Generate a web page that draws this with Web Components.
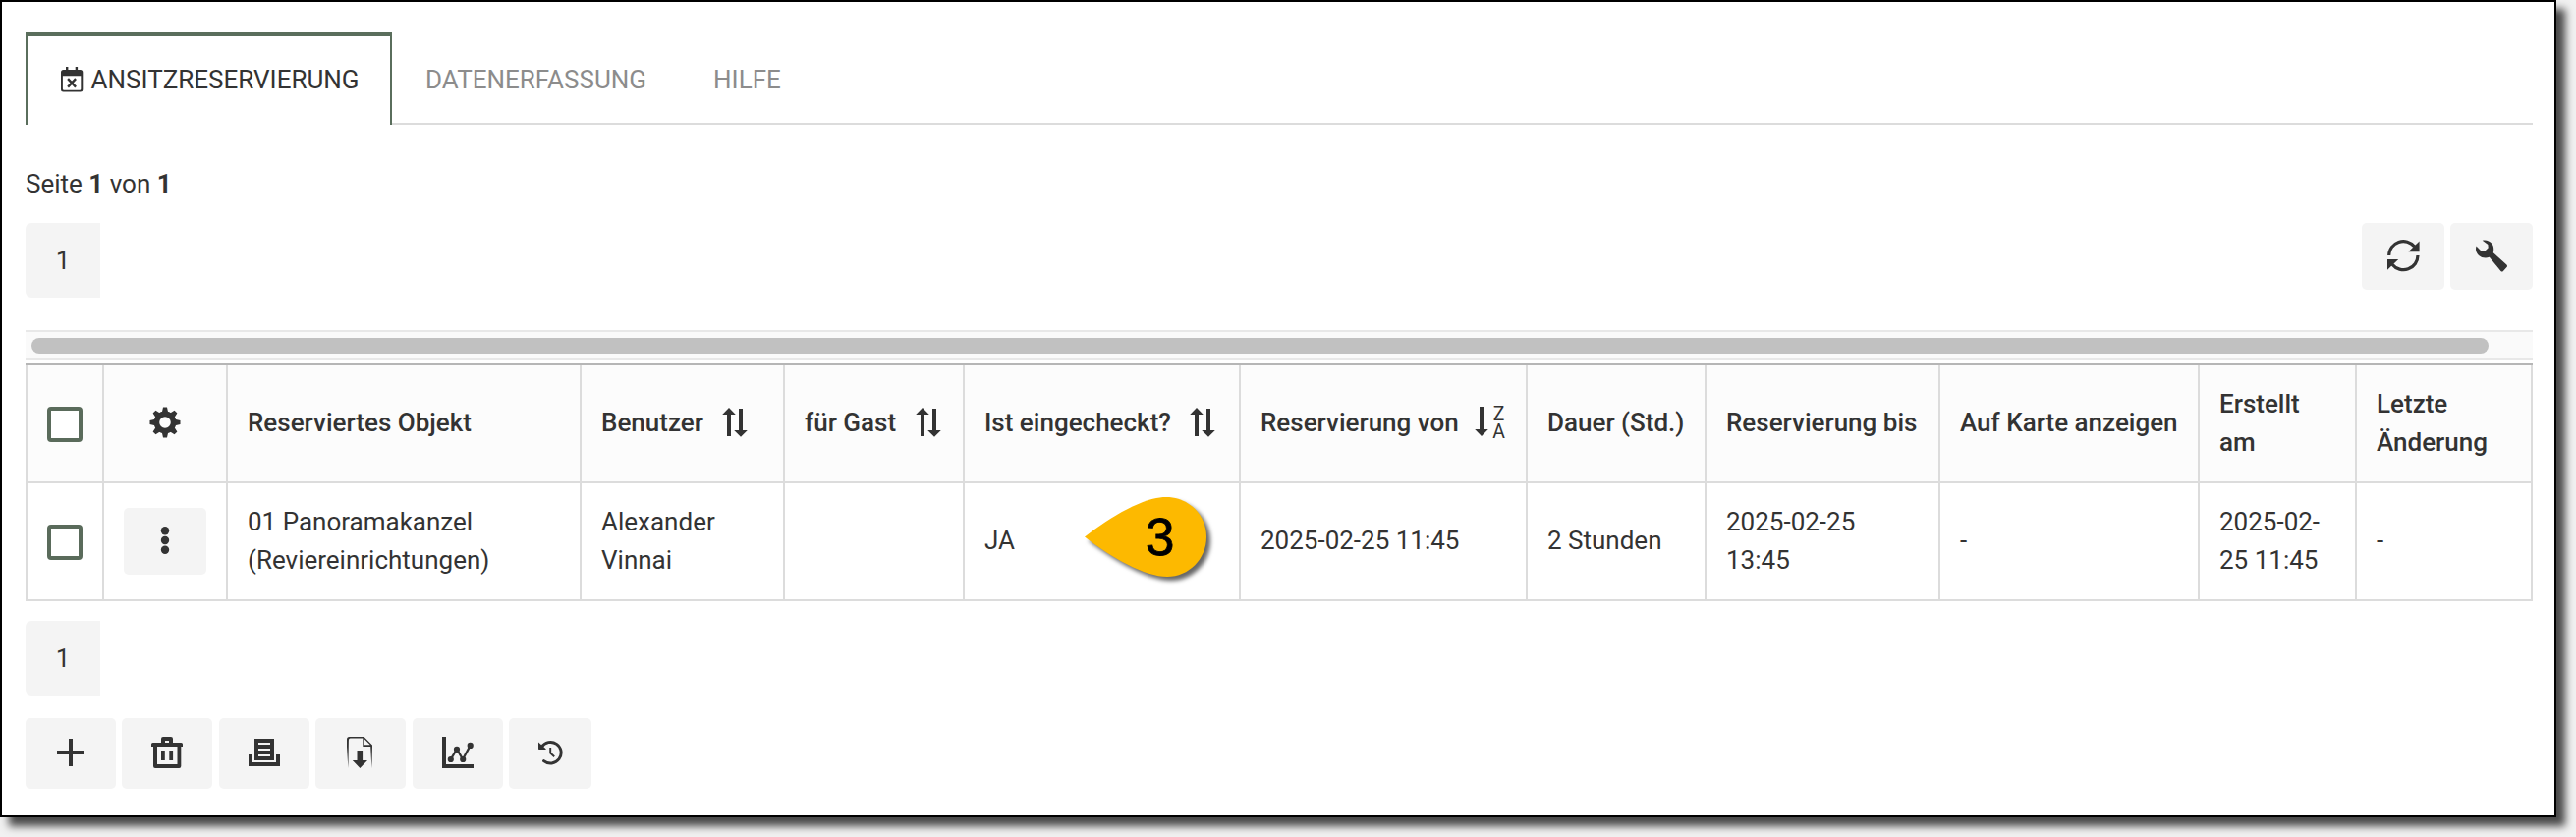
<!DOCTYPE html>
<html lang="de">
<head>
<meta charset="utf-8">
<title>Ansitzreservierung</title>
<style>
  body {
    margin: 0;
    height: 852px;
    overflow: hidden;
    background: #f1f1f1;
    color: #333;
    font: 26px/39px Roboto, "Liberation Sans", sans-serif;
  }
  .row {
    display: flex;
    align-items: flex-start;
    justify-content: space-between;
  }
  .actions {
    display: flex;
    gap: 6px;
  }
  .page-info {
    margin: 41px 0 20px;
  }
  .toolbar {
    display: flex;
    gap: 6.4px;
    margin-top: 23px;
  }
</style>
</head>
<body>
<app-window>
  <tab-bar>
    <tab-item active><ui-icon name="calendar"></ui-icon>ANSITZRESERVIERUNG</tab-item>
    <tab-item>DATENERFASSUNG</tab-item>
    <tab-item>HILFE</tab-item>
  </tab-bar>
  <div class="page-info">Seite <b>1</b> von <b>1</b></div>
  <div class="row">
    <page-button>1</page-button>
    <div class="actions">
      <icon-button icon="refresh"></icon-button>
      <icon-button icon="wrench"></icon-button>
    </div>
  </div>
  <scroll-bar></scroll-bar>
  <data-table></data-table>
  <div class="row" style="margin-top: 20px"><page-button>1</page-button></div>
  <div class="toolbar">
    <icon-button icon="plus" size="large"></icon-button>
    <icon-button icon="trash" size="large"></icon-button>
    <icon-button icon="print" size="large"></icon-button>
    <icon-button icon="export" size="large"></icon-button>
    <icon-button icon="chart" size="large"></icon-button>
    <icon-button icon="history" size="medium"></icon-button>
  </div>
</app-window>

<script>
  // name: [width, height, markup]
  const ICONS = {
    calendar: [23, 26, `
      <path d="M5 0h2.4v4H5zM14.7 0h2.4v4h-2.4z"/>
      <path fill-rule="evenodd" d="M2.5 3h17.3a2.5 2.5 0 0 1 2.5 2.5v17.6a2.5 2.5 0 0 1-2.5 2.5H2.5A2.5 2.5 0 0 1 0 23.1V5.5A2.5 2.5 0 0 1 2.5 3zM1.9 9.3v13.3a1.2 1.2 0 0 0 1.2 1.2h16a1.2 1.2 0 0 0 1.2-1.2V9.3z"/>
      <path d="M7.1 12.2l8 8.4M15.1 12.2l-8 8.4" fill="none" stroke="currentColor" stroke-width="2.4"/>`],
    refresh: [33, 32, `
      <path d="M1.7 16A14.6 14.6 0 0 1 27.6 7M31 16A14.6 14.6 0 0 1 5 25.2" fill="none" stroke="currentColor" stroke-width="3.2"/>
      <path d="M32.6 1.5V12.2H21.5zM0 30.8V20h11.2z"/>`],
    wrench: [32, 33, `
      <path d="M6.7.8C10-.2 14 .9 16.4 4c1.7 2.3 2.3 5 1.4 9.3L31.4 25.6c.8.8.8 1.7.1 2.5l-3.6 3.8c-.8.8-1.6.8-2.4 0L13.8 17.8C9.8 19 5.8 18.4 3 15.9.1 13.3-.6 9.7.5 6.5l4.7 4.8 4.2.3 3.3-3.4-.3-3.2z"/>`],
    gear: [32, 32, `
      <circle cx="16" cy="16" r="8.6" fill="none" stroke="currentColor" stroke-width="5.6"/>
      <path d="M14 .5h4l1.2 5.5h-6.4zM14 31.5h4l1.2-5.5h-6.4z"/>
      <path d="M14 .5h4l1.2 5.5h-6.4zM14 31.5h4l1.2-5.5h-6.4z" transform="rotate(45 16 16)"/>
      <path d="M14 .5h4l1.2 5.5h-6.4zM14 31.5h4l1.2-5.5h-6.4z" transform="rotate(90 16 16)"/>
      <path d="M14 .5h4l1.2 5.5h-6.4zM14 31.5h4l1.2-5.5h-6.4z" transform="rotate(135 16 16)"/>`],
    dots: [10, 30, `<circle cx="5" cy="5.2" r="4.2"/><circle cx="5" cy="15" r="4.2"/><circle cx="5" cy="24.8" r="4.2"/>`],
    sort: [26, 30, `
      <path d="M5 29V7H.2L7 0l6.8 7H9v22zM17 1h4v22h4.8L19 29.8 12.2 23H17z"/>`],
    sortDesc: [32, 34, `
      <path d="M5 1h4v23h4.8L7 31 .2 24H5z"/>
      <text x="24.5" y="14.8" text-anchor="middle" font-size="19.4">Z</text>
      <text x="24.5" y="33" text-anchor="middle" font-size="19.4">A</text>`],
    plus: [28, 28, `<path d="M12 0h4v12h12v4H16v12h-4V16H0v-4h12z"/>`],
    trash: [32, 32, `
      <path fill-rule="evenodd" d="M10 6V2a2 2 0 0 1 2-2h8a2 2 0 0 1 2 2v4h8.5A1.5 1.5 0 0 1 32 7.5V10H30.3v20a2 2 0 0 1-2 2H4a2 2 0 0 1-2-2V10H0V7.5A1.5 1.5 0 0 1 1.5 6zM14 4v2h4V4zM6 10v18h20.5V10z"/>
      <path d="M10 14h3.8v10H10zM18.3 14h3.8v10h-3.8z"/>`],
    print: [32, 28, `
      <path fill-rule="evenodd" d="M6 0h20v22H6zM10 4v2h12V4zM10 10v2h12v-2zM10 16v2h12v-2z"/>
      <path d="M0 16h4v8h24v-8h4v12H0z"/>`],
    export: [32, 32, `
      <path fill-rule="evenodd" d="M4.5 0H19.5L28 8.5V10l-.6 22L26.2 10H18.3V1.6H5.5Q3.9 1.6 3.9 3.5L3.4 32 2 10V2.5Q2 0 4.5 0zM20 2.5v5.8h5.8z"/>
      <path d="M12.5 14h5.6v10H23l-7.6 8-7.6-8h4.7z"/>`],
    chart: [32, 32, `
      <path d="M0 0h4v28h28v4H0z"/>
      <path d="M8.8 23L15 12.5 21 23l7.7-14.3" fill="none" stroke="currentColor" stroke-width="2.3"/>
      <circle cx="8.8" cy="23" r="3.1"/><circle cx="15" cy="12.8" r="3.1"/><circle cx="21.2" cy="23" r="3.1"/><circle cx="28.7" cy="8.9" r="3.1"/>`],
    history: [24, 25, `
      <path d="M3.2 6.5A10.8 10.8 0 1 1 5.5 20.6" fill="none" stroke="currentColor" stroke-width="2.9" stroke-linecap="round"/>
      <path d="M0 1.5l7.6 6.7V9H.6L0 8.4z"/>
      <path d="M12.2 7v5.5l4 3.7" fill="none" stroke="currentColor" stroke-width="1.9"/>`],
  };

  class UiIcon extends HTMLElement {
    constructor() {
      super();
      this.attachShadow({ mode: "open" });
    }

    connectedCallback() {
      const [w, h, markup] = ICONS[this.getAttribute("name")];
      this.shadowRoot.innerHTML = `
        <style>
          :host { display: inline-block; flex: none; line-height: 0; font-weight: 400; }
          svg { display: block; overflow: visible; }
        </style>
        <svg width="${w}" height="${h}" viewBox="0 0 ${w} ${h}" fill="currentColor">${markup}</svg>
      `;
    }
  }

  class AppWindow extends HTMLElement {
    constructor() {
      super();
      this.attachShadow({ mode: "open" });
      this.shadowRoot.innerHTML = `
        <style>
          :host {
            display: block;
            box-sizing: border-box;
            width: 2602px;
            height: 832px;
            padding: 31px 22px 0 24px;
            border: 2px solid #000;
            background: #fff;
            box-shadow: 9px 9px 8px rgba(0, 0, 0, 0.7);
          }
        </style>
        <slot></slot>
      `;
    }
  }

  class TabBar extends HTMLElement {
    constructor() {
      super();
      this.attachShadow({ mode: "open" });
      this.shadowRoot.innerHTML = `
        <style>
          :host { display: flex; height: 94px; }
          .rest { flex: 1; border-bottom: 2px solid #dcdcdc; }
        </style>
        <slot></slot>
        <div class="rest"></div>
      `;
    }
  }

  class TabItem extends HTMLElement {
    constructor() {
      super();
      this.attachShadow({ mode: "open" });
      this.shadowRoot.innerHTML = `
        <style>
          :host {
            display: flex;
            align-items: center;
            box-sizing: border-box;
            gap: 7.5px;
            padding: 4px 34px 0;
            color: #8c8c8c;
            border-bottom: 2px solid #dcdcdc;
          }
          :host([active]) {
            padding: 0 31.5px 1px 34px;
            color: #333;
            border: 2px solid #5a6e5c;
            border-top-width: 4px;
            border-bottom: 0;
          }
          ::slotted(ui-icon) { margin-bottom: 1px; }
        </style>
        <slot></slot>
      `;
    }
  }

  class PageButton extends HTMLElement {
    constructor() {
      super();
      this.attachShadow({ mode: "open" });
      this.shadowRoot.innerHTML = `
        <style>
          :host {
            display: flex;
            align-items: center;
            justify-content: center;
            width: 76px;
            height: 76px;
            border-radius: 6px 0 0 6px;
            background: #f4f4f4;
          }
        </style>
        <slot></slot>
      `;
    }
  }

  class IconButton extends HTMLElement {
    constructor() {
      super();
      this.attachShadow({ mode: "open" });
    }

    connectedCallback() {
      this.shadowRoot.innerHTML = `
        <style>
          :host {
            display: flex;
            align-items: center;
            justify-content: center;
            box-sizing: border-box;
            width: 84px;
            height: 68px;
            padding-bottom: 2px;
            border-radius: 5px;
            background: #f4f4f4;
          }
          :host([size="large"]) { width: 92px; height: 72px; }
          :host([size="medium"]) { height: 72px; }
        </style>
        <ui-icon name="${this.getAttribute("icon")}"></ui-icon>
      `;
    }
  }

  class ScrollBar extends HTMLElement {
    constructor() {
      super();
      this.attachShadow({ mode: "open" });
      this.shadowRoot.innerHTML = `
        <style>
          :host {
            display: block;
            box-sizing: border-box;
            height: 30px;
            margin: 33px 0 4px;
            padding: 6px 45px 4px 6px;
            border: solid #e8e8e8;
            border-width: 2px 0;
            background: #fafafa;
          }
          .thumb { height: 16px; border-radius: 8px; background: #c1c1c1; }
        </style>
        <div class="thumb"></div>
      `;
    }
  }

  class CheckBox extends HTMLElement {
    constructor() {
      super();
      this.attachShadow({ mode: "open" });
      this.shadowRoot.innerHTML = `
        <style>
          :host {
            display: block;
            box-sizing: border-box;
            width: 36px;
            height: 36px;
            border: 4px solid #5a6b5b;
            border-radius: 4px;
            background: #fff;
          }
        </style>
      `;
    }
  }

  class MarkerBadge extends HTMLElement {
    constructor() {
      super();
      this.attachShadow({ mode: "open" });
      this.shadowRoot.innerHTML = `
        <style>
          :host { display: block; width: 124px; height: 82px; }
          svg { display: block; overflow: visible; filter: drop-shadow(4px 4px 2px rgba(0, 0, 0, 0.6)); }
          .label {
            position: absolute;
            left: 62px;
            top: 11px;
            color: #000;
            font: 53px/60px "Liberation Sans", Arial, sans-serif;
            -webkit-text-stroke: 0.8px #000;
          }
        </style>
        <svg width="124" height="82" viewBox="0 0 124 82">
          <path fill="#fdb900" d="M0 40.5C28 19 60 0 83 0c23 0 41 18 41 40.5S106 81 84 81C61 81 28 62 0 40.5z"/>
        </svg>
        <span class="label"><slot></slot></span>
      `;
    }
  }

  class DataTable extends HTMLElement {
    constructor() {
      super();
      this.attachShadow({ mode: "open" });

      this.columns = [
        { title: "Reserviertes Objekt", value: "01 Panoramakanzel (Reviereinrichtungen)" },
        { title: "Benutzer", value: "Alexander Vinnai", sort: "sort" },
        { title: "für Gast", value: "", sort: "sort" },
        { title: "Ist eingecheckt?", value: "JA", sort: "sort", marker: "3" },
        { title: "Reservierung von", value: "2025-02-25 11:45", sort: "sortDesc" },
        { title: "Dauer (Std.)", value: "2 Stunden" },
        { title: "Reservierung bis", value: "2025-02-25 13:45" },
        { title: "Auf Karte anzeigen", value: "-" },
        { title: "Erstellt am", value: "2025-02-25 11:45" },
        { title: "Letzte Änderung", value: "-" },
      ];

      this.render();
    }

    render() {
      this.shadowRoot.innerHTML = `
        <style>
          :host {
            display: grid;
            grid-template-columns: 80px 126px 360px 207px 183px 281px 292px 182px 238px 264px 160px 179px;
            grid-template-rows: 120px 120px;
            border-top: 2px solid #b6b6b6;
          }
          .cell {
            position: relative;
            display: flex;
            align-items: center;
            box-sizing: border-box;
            padding: 0 19px 0 20px;
            border-right: 2px solid #dcdcdc;
            border-bottom: 2px solid #dcdcdc;
          }
          .cell span { min-height: 40px; }
          .first { border-left: 2px solid #dcdcdc; }
          .first, .center { padding: 0; justify-content: center; }
          .head { gap: 19.5px; background: #fcfcfc; font-weight: 500; }
          .sortable { padding-right: 0; white-space: nowrap; }
          .head ui-icon { margin-bottom: 2px; }
          .head ui-icon[name="sortDesc"] { margin-left: -3px; }
          check-box { margin-top: 2px; }
          marker-badge { position: absolute; left: 122px; top: 14px; }
        </style>
        <div class="cell head first"><check-box></check-box></div>
        <div class="cell head center"><ui-icon name="gear"></ui-icon></div>
        ${this.columns
          .map(
            (col) => `
          <div class="cell head ${col.sort ? "sortable" : ""}">
            <span>${col.title}</span>${col.sort ? `<ui-icon name="${col.sort}"></ui-icon>` : ""}
          </div>
        `
          )
          .join("")}
        <div class="cell first"><check-box></check-box></div>
        <div class="cell center"><icon-button icon="dots"></icon-button></div>
        ${this.columns
          .map(
            (col) => `
          <div class="cell">
            <span>${col.value}</span>${col.marker ? `<marker-badge>${col.marker}</marker-badge>` : ""}
          </div>
        `
          )
          .join("")}
      `;
    }
  }

  customElements.define("ui-icon", UiIcon);
  customElements.define("app-window", AppWindow);
  customElements.define("tab-bar", TabBar);
  customElements.define("tab-item", TabItem);
  customElements.define("page-button", PageButton);
  customElements.define("icon-button", IconButton);
  customElements.define("scroll-bar", ScrollBar);
  customElements.define("check-box", CheckBox);
  customElements.define("marker-badge", MarkerBadge);
  customElements.define("data-table", DataTable);
</script>
</body>
</html>
